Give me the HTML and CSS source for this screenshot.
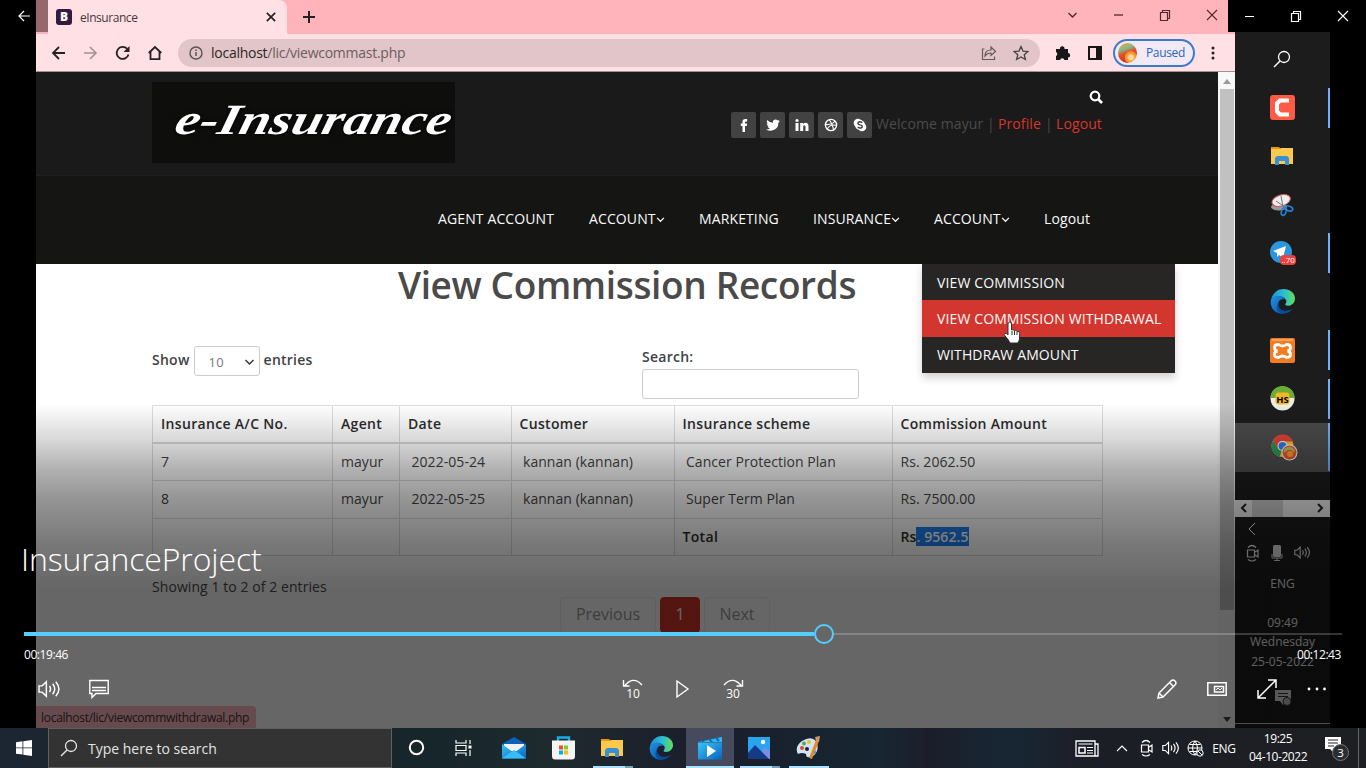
FILE: index.html
```html
<!DOCTYPE html>
<html lang="en">
<head>
<meta charset="utf-8">
<title>InsuranceProject</title>
<link rel="stylesheet" href="styles.css">
</head>
<body>
<svg class="defs" width="0" height="0" aria-hidden="true">
  <defs>
    <linearGradient id="edgeA" x1="0" y1="0" x2="1" y2="0"><stop offset="0" stop-color="#1b8fd8"/><stop offset=".55" stop-color="#2bbfd0"/><stop offset="1" stop-color="#66dd55"/></linearGradient>
    <linearGradient id="edgeB" x1="0" y1="0" x2="1" y2="1"><stop offset="0" stop-color="#1f94e4"/><stop offset="1" stop-color="#0b4fa3"/></linearGradient>
    <linearGradient id="blueG" x1="0" y1="0" x2="1" y2="1"><stop offset="0" stop-color="#36c5f8"/><stop offset="1" stop-color="#0a64c0"/></linearGradient>
  </defs>
  <symbol id="folder" viewBox="0 0 22 20"><path d="M0 1h8l2 2h-10z" fill="#e59a0c"/><path d="M0 3h9l1-1h12v16H0z" fill="#fdc94c"/><path d="M4 19v-7l2-2h10l2 2v7h-4v-4H8v4z" fill="#3a8ed6"/></symbol>
  <symbol id="edge" viewBox="0 0 24 24"><path d="M1 10C3 3 8 0 13 0c6 0 11 4 11 9 0 4-3 7-7 7-2 0-3-1-2-2 1-2 1-3 0-4-3-4-10-4-14 0z" fill="url(#edgeA)"/><path d="M1 10c4-5 11-4 13 0-4-1-7 2-6 6 1 4 4 7 7 7-8 3-16-4-14-13z" fill="url(#edgeB)"/><path d="M9 12c-3 6 3 12 13 7-5 6-13 6-15 1-1-3 0-6 2-8z" fill="#0a4c9a"/></symbol>
  <symbol id="volume" viewBox="0 0 22 18"><path d="M1 6h3l4-4v14l-4-4H1z M11 6q2 3 0 6 M14 4q4 5 0 10 M17 2q6 7 0 14" fill="none" stroke="currentColor" stroke-width="1.4"/></symbol>
  <symbol id="meet" viewBox="0 0 14 18"><path d="M1.500 6h7v7h-7z M9 8l3-2v7l-3-2 M2 3.500q4-4 8 0 M2 15.500q4 3 8 0" fill="none" stroke="currentColor" stroke-width="1.200"/></symbol>
  <symbol id="glass" viewBox="0 0 18 18"><circle cx="11" cy="7" r="5.500" fill="none" stroke="currentColor" stroke-width="1.300"/><path d="M7 11L1 17" stroke="currentColor" stroke-width="1.400"/></symbol>
  <symbol id="restore" viewBox="0 0 12 12"><path d="M1.500 3.500h7v8h-7z M3.500 3V1.500h7v8H9" fill="none" stroke="currentColor" stroke-width="1.200"/></symbol>
  <symbol id="close" viewBox="0 0 12 12"><path d="M1 1l10 10M11 1L1 11" stroke="currentColor" stroke-width="1.100"/></symbol>
  <symbol id="down" viewBox="0 0 10 7"><path d="M1 1l4 4 4-4" fill="none" stroke="currentColor" stroke-width="1.400"/></symbol>
</svg>

<div class="stage">
  <div class="video">
    <section class="browser">
      <div class="tabstrip">
        <div class="tab">
          <span class="favicon">B</span><span class="tab-title">eInsurance</span>
          <svg width="10" height="10" viewBox="0 0 12 12"><path d="M1 1l10 10M11 1L1 11" stroke="#222" stroke-width="2"/></svg>
        </div>
        <svg class="newtab" width="14" height="14"><path d="M7 1v12M1 7h12" stroke="#222" stroke-width="2"/></svg>
        <div class="winbtns">
          <svg class="thin" width="11" height="7"><use href="#down"/></svg>
          <svg width="10" height="4"><path d="M0 2h9" stroke="currentColor" stroke-width="1.300"/></svg>
          <svg width="12" height="12"><use href="#restore"/></svg>
          <svg width="12" height="12"><use href="#close"/></svg>
        </div>
      </div>
      <div class="toolbar">
        <div class="navbtns">
          <svg width="15" height="14" viewBox="0 0 15 14"><path d="M14 7H2M8 1L2 7l6 6" fill="none" stroke="#222" stroke-width="1.800"/></svg>
          <svg width="15" height="14" viewBox="0 0 15 14"><path d="M1 7h12M7 1l6 6-6 6" fill="none" stroke="#a88f93" stroke-width="1.600"/></svg>
          <svg width="16" height="16" viewBox="0 0 16 16"><path d="M13.500 9.500a6 6 0 1 1-1.500-5.800" fill="none" stroke="#222" stroke-width="1.800"/><path d="M14.500 1v6h-6z" fill="#222"/></svg>
          <svg width="14" height="16" viewBox="0 0 14 16"><path d="M.7 8L7 2l6.300 6M2.500 7v7.200h9V7" fill="none" stroke="#222" stroke-width="1.800"/></svg>
        </div>
        <div class="omnibox">
          <svg width="16" height="16"><circle cx="8" cy="8" r="6" fill="none" stroke="#555" stroke-width="1.400"/><path d="M8 7v4M8 4.500V6" stroke="#555" stroke-width="1.500"/></svg>
          <span class="url">localhost<i>/lic/viewcommast.php</i></span>
          <svg class="share" width="17" height="16" viewBox="0 0 17 16"><path d="M3.500 4H1.500v10.500h12v-3M4 11q0-6 6-6V2l4.500 4.500L10 10.500V8Q6 8 4 11z" fill="none" stroke="#665a5c" stroke-width="1.200"/></svg>
          <svg width="16" height="16" viewBox="0 0 16 16"><path d="M8 1.500l2 4.600 5 .4-3.800 3.200 1.200 4.800L8 12l-4.400 2.500 1.200-4.800L1 6.500l5-.4z" fill="none" stroke="#444" stroke-width="1.300"/></svg>
        </div>
        <svg class="puzzle" width="16" height="16" viewBox="0 0 16 16"><path d="M1 4h4a2.300 2.300 0 1 1 4.500 0H13v4a2.200 2.200 0 1 1 0 4.400V15H9.500a2.300 2.300 0 0 0-4.500 0H1v-4a2.200 2.200 0 0 0 0-4z" fill="#171717"/></svg>
        <svg class="side" width="14" height="16"><path d="M1 2h12v12H1z" fill="none" stroke="#171717" stroke-width="2"/><path d="M8 2h5v12H8z" fill="#171717"/></svg>
        <div class="profile"><span class="avatar"></span><span>Paused</span></div>
        <svg width="4" height="16" fill="#222"><circle cx="2" cy="3" r="1.500"/><circle cx="2" cy="8" r="1.500"/><circle cx="2" cy="13" r="1.500"/></svg>
      </div>
      <div class="viewport">
        <main class="page">
          <header class="top">
            <div class="logo"><span>e-Insurance</span></div>
            <div class="account">
              <svg class="find" width="14" height="14"><circle cx="6" cy="6" r="4.300" fill="none" stroke="#fff" stroke-width="2.200"/><path d="M9 9l4 4" stroke="#fff" stroke-width="2.600"/></svg>
              <div class="social">
                <b><svg width="14" height="14" viewBox="0 0 14 14"><path d="M5.500 14V8H3.800V5.500h1.700V3.600Q5.500 1 8.200 1h1.900v2.400H8.800q-.8 0-.8.800v1.300h2.100L9.800 8H8v6z" fill="#fff"/></svg></b>
                <b><svg width="14" height="14" viewBox="0 0 14 14"><path d="M0 11.500q2.500.1 4-1.100Q2 10 1.600 8.300h1.200Q.8 7.500.7 5.400l1.200.3Q0 4 1.200 1.900 3.500 4.600 6.900 4.800 6.700 1.600 9.600 1.600q1.300 0 2 .8L13.400 1.800l-1 1.500L14 2.900l-1.500 1.600Q12.400 11.800 5 12.700q-3 0-5-1.200z" fill="#fff"/></svg></b>
                <b><svg width="14" height="14" viewBox="0 0 14 14"><path d="M.5 5h3v8h-3zM5.200 5H8v1.200Q8.900 4.800 10.500 4.800q3 0 3 3.500V13h-3V8.700q0-1.500-1.100-1.500Q8.200 7.200 8.200 8.800V13h-3z" fill="#fff"/><circle cx="2" cy="2.500" r="1.600" fill="#fff"/></svg></b>
                <b><svg width="14" height="14" viewBox="0 0 14 14"><path d="M5 1.500q4 5 4.500 11M1.500 6.500Q8 7 11 3M3 11.500q3-6 9.800-4" fill="none" stroke="#fff" stroke-width="1.200"/><circle cx="7" cy="7" r="5.600" fill="none" stroke="#fff" stroke-width="1.400"/></svg></b>
                <b><svg width="14" height="14" viewBox="0 0 14 14"><circle cx="5" cy="5" r="4.300" fill="#fff"/><circle cx="9" cy="9" r="4.300" fill="#fff"/><circle cx="7" cy="7" r="5" fill="#fff"/><path d="M9.200 4.700Q7 3 5.300 4.300 4 6 7 6.900q3 .8 2 2.400-2 1.500-4.300-.2" fill="none" stroke="#444" stroke-width="1.500"/></svg></b>
                <span class="hello">Welcome mayur |</span><a class="l1">Profile</a><span class="bar">|</span><a>Logout</a>
              </div>
            </div>
          </header>
          <nav class="menu">
            <a class="s0">AGENT ACCOUNT</a>
            <a class="s1">ACCOUNT<svg width="9" height="6"><use href="#down"/></svg></a>
            <a class="s2">MARKETING</a>
            <a class="s3">INSURANCE<svg width="9" height="6"><use href="#down"/></svg></a>
            <a class="s4">ACCOUNT<svg width="9" height="6"><use href="#down"/></svg></a>
            <a class="s5">Logout</a>
            <div class="dropdown"><a>VIEW COMMISSION</a><a class="hot">VIEW COMMISSION WITHDRAWAL</a><a>WITHDRAW AMOUNT</a>
              <svg class="cursor" width="18" height="24" viewBox="0 0 18 24"><path d="M5 14V3q0-2 1.700-2T8.500 3v6q1.500-1 2.800.5 1.700-.8 2.600.8 2.500-.5 2.700 2V17q0 3-2 5H7q-1-3-5-7-1.500-2 0-2.600T5 14z" fill="#fff" stroke="#333" stroke-width="1"/><path d="M9 10v4M11.500 10v4M14 11v3" stroke="#333"/></svg>
            </div>
          </nav>
          <h1>View Commission Records</h1>
          <div class="filters">
            <label class="show">Show <span class="select">10<svg width="11" height="7" viewBox="0 0 10 7"><use href="#down"/></svg></span> entries</label>
            <label class="search">Search:<span class="input"></span></label>
          </div>
          <table>
            <colgroup><col class="c1"><col class="c2"><col class="c3"><col class="c4"><col class="c5"><col class="c6"></colgroup>
            <tr class="h"><th>Insurance A/C No.</th><th>Agent</th><th>Date</th><th>Customer</th><th>Insurance scheme</th><th>Commission Amount</th></tr>
            <tr><td>7</td><td>mayur</td><td class="in">2022-05-24</td><td class="in">kannan (kannan)</td><td class="in">Cancer Protection Plan</td><td>Rs. 2062.50</td></tr>
            <tr><td>8</td><td>mayur</td><td class="in">2022-05-25</td><td class="in">kannan (kannan)</td><td class="in">Super Term Plan</td><td>Rs. 7500.00</td></tr>
            <tr class="sum"><th></th><th></th><th></th><th></th><th>Total</th><th>Rs<mark>. 9562.5</mark></th></tr>
          </table>
          <p class="info">Showing 1 to 2 of 2 entries</p>
          <div class="pages"><span class="pv">Previous</span><span class="on">1</span><span class="nx">Next</span></div>
          <div class="status">localhost/lic/viewcommwithdrawal.php</div>
        </main>
        <div class="scroll"><i class="up"></i><div class="thumb"></div><i class="dn"></i></div>
      </div>
    </section>
    <aside class="dock">
      <div class="cell"><svg width="18" height="18"><use href="#glass"/></svg></div>
      <div class="cell run"><svg width="25" height="25"><rect width="25" height="25" rx="3" fill="#ff5a43"/><path d="M19 3.500H9l-4 4v10l4 4h10v-4h-8l-2-2v-6l2-2h8z" fill="#fff"/></svg></div>
      <div class="cell"><svg width="22" height="20"><use href="#folder"/></svg></div>
      <div class="cell"><svg width="24" height="24" viewBox="0 0 24 24"><ellipse cx="9" cy="14" rx="8" ry="3.500" fill="#999"/><ellipse cx="11" cy="7.500" rx="9.500" ry="5.500" fill="#eee" stroke="#c95b5b" transform="rotate(-17 11 7)"/><path d="M11 3l2 11M6 8l9 6" stroke="#777"/><g fill="none" stroke="#2684d9" stroke-width="1.600"><ellipse cx="14" cy="18.500" rx="2.300" ry="4" transform="rotate(20 14 18)"/><ellipse cx="19" cy="15.500" rx="4" ry="2.300" transform="rotate(20 19 15)"/></g></svg></div>
      <div class="cell run"><svg width="28" height="26" viewBox="0 0 28 26"><circle cx="13" cy="12" r="11" fill="#2b96dc"/><path d="M5 11l13-5-3 12-4-3-2 2v-4z" fill="#fff"/><rect x="12" y="15" width="16" height="10" rx="4" fill="#e9413b"/><text x="13.500" y="23" font-size="8" fill="#fff" font-family="Open Sans, sans-serif">..70</text></svg></div>
      <div class="cell"><svg width="25" height="25"><use href="#edge"/></svg></div>
      <div class="cell run"><svg width="25" height="25"><rect width="25" height="25" rx="2" fill="#f47b20"/><path d="M2 2h21" stroke="#fff" opacity=".6"/><path d="M8.500 6.500Q12.500 9.500 16.500 6.500q4 0 4 3 0 3-3 3.500 3 .5 3 3.500 0 3-4 3-4-3-8 0-4 0-4-3 0-3 3-3.500-3-.5-3-3.500 0-3 4-3z" fill="none" stroke="#fff" stroke-width="2.800"/></svg></div>
      <div class="cell run"><svg width="25" height="25"><circle cx="12.500" cy="12.500" r="12" fill="#e8eee2"/><path d="M.5 12a12 12 0 0 1 24 0z" fill="#6aad32"/><rect x="5.500" y="6.500" width="14" height="12" rx="3" fill="#f4b528"/><text x="12.500" y="16.500" text-anchor="middle" font-size="9.500" font-weight="700" font-family="Open Sans, sans-serif">HS</text></svg></div>
      <div class="cell run active"><svg width="27" height="27" viewBox="0 0 27 27"><circle cx="11.500" cy="12" r="11" fill="#f3bd2b"/><path d="M2 6.500a11 11 0 0 1 20 1H11.500l-5 7z" fill="#e04439"/><path d="M2 6.500l5 8 4 2-2.500 6.200A11 11 0 0 1 2 6.500z" fill="#299653"/><circle cx="11.500" cy="12" r="5" fill="#fff"/><circle cx="11.500" cy="12" r="4" fill="#2f78e0"/><circle cx="18.500" cy="18.500" r="8" fill="#eee"/><circle cx="18.500" cy="18.500" r="7" fill="#e5502c"/><path d="M13 15q6-5 11 1l-1 3q-2-4-6-3l-4 3z" fill="#a9b857"/><circle cx="19" cy="20" r="3" fill="#f49b31"/></svg></div>
      <div class="hscroll"><svg width="17" height="10" viewBox="0 0 17 10"><path d="M11 1L7 5l4 4" fill="none" stroke="#222" stroke-width="2"/></svg><i></i><svg class="r" width="17" height="10" viewBox="0 0 17 10"><path d="M5 1l4 4-4 4" fill="none" stroke="#222" stroke-width="2"/></svg></div>
      <div class="dock-tray">
        <svg class="chev" width="8" height="12"><path d="M7 0L1 6l6 6" fill="none" stroke="#fff"/></svg>
        <div class="trayrow"><svg width="14" height="18"><use href="#meet"/></svg><svg width="12" height="18"><rect x="2" y="1" width="8" height="12" rx="1.500" fill="#ddd"/><path d="M1 10v4h10v-4M6 14v3M3 16.500h6" fill="none" stroke="#ddd"/></svg><svg width="17" height="15"><use href="#volume"/></svg></div>
        <div class="lang">ENG</div>
        <div class="when">09:49<br>Wednesday<br>25-05-2022</div>
        <svg class="note" width="18" height="18"><path d="M1 1h16v11h-5l-3 4-3-4H1z" fill="#ddd"/><path d="M4 4.500h10M4 7.500h10" stroke="#333"/><circle cx="13" cy="12.500" r="4" fill="#bbb" stroke="#333"/></svg>
      </div>
    </aside>
  </div>

  <div class="player">
    <div class="backbtn"><svg width="12" height="12" viewBox="0 0 12 12"><path d="M12 6H1M6 1L1 6l5 5" fill="none" stroke="#fff" stroke-width="1.200"/></svg></div>
    <div class="caption">
      <svg width="10" height="4"><path d="M0 2.500h9" stroke="currentColor"/></svg>
      <svg width="12" height="12"><use href="#restore"/></svg>
      <svg width="12" height="12"><use href="#close"/></svg>
    </div>
    <div class="shade">
      <div class="title">InsuranceProject</div>
      <div class="seek"><div class="played"></div><div class="knob"></div><div class="rest"></div></div>
      <div class="times"><span>00:19:46</span><span>00:12:43</span></div>
      <div class="controls">
        <div class="grp left"><svg width="23" height="20"><use href="#volume"/></svg><svg width="20" height="20"><path d="M.8 1.500h18.400v13H7L3 18.500v-4H.8z M3 8.500h14M3 11.500h14" fill="none" stroke="#fff" stroke-width="1.400"/></svg></div>
        <div class="grp mid">
          <svg width="22" height="22"><path d="M2 8.500Q11-3 20 7M1.500 2v6h6" fill="none" stroke="#fff" stroke-width="1.400"/><text x="11" y="19.500" text-anchor="middle" font-size="12">10</text></svg>
          <svg width="14" height="20"><path d="M1 2v16l11-8z" fill="none" stroke="#fff" stroke-width="1.400"/></svg>
          <svg width="22" height="22"><path d="M20 8.500Q11-3 2 7M20.500 2v6h-6" fill="none" stroke="#fff" stroke-width="1.400"/><text x="11" y="19.500" text-anchor="middle" font-size="12">30</text></svg>
        </div>
        <div class="grp right">
          <svg width="20" height="20"><path d="M1 19l1-5L14 2q2-2 4 0t0 4L6 18zM2 14l4 4M12.500 3.500l4 4" fill="none" stroke="#fff" stroke-width="1.500"/></svg>
          <svg width="20" height="14"><path d="M.8.800h18.400v12.400H.8z M7.500 4.500h9v5.500h-9z" fill="none" stroke="#fff" stroke-width="1.500"/><path d="M9 8l2-2 2 2 2-2" fill="none" stroke="#fff"/></svg>
          <svg width="20" height="20"><path d="M1.500 18.500l17-17M11 1h8v8M1 11v8h8" fill="none" stroke="#fff" stroke-width="1.500"/></svg>
          <svg width="20" height="4" fill="#fff"><circle cx="2" cy="2" r="1.400"/><circle cx="10" cy="2" r="1.400"/><circle cx="17.500" cy="2" r="1.400"/></svg>
        </div>
      </div>
    </div>
  </div>
</div>

<footer class="taskbar">
  <div class="start"><svg width="16" height="16"><path d="M0 2.300l6.500-1v6.200H0zM7.300 1.200L16 0v7.500H7.300zM0 8.300h6.500v6.300L0 13.700zM7.300 8.300H16V16l-8.700-1.200z" fill="#fff"/></svg></div>
  <div class="tsearch"><svg width="18" height="18"><use href="#glass"/></svg><span>Type here to search</span></div>
  <div class="apps">
  <div class="app"><svg width="17" height="17"><circle cx="8.500" cy="8.500" r="6.700" fill="none" stroke="#fff" stroke-width="2"/></svg></div>
  <div class="app tv"><svg width="17" height="16"><path d="M1 0v3h10V0M1 16v-3h10v3M1 5.500h10v5H1zM15 0v4M15 10v6" fill="none" stroke="#fff" stroke-width="1.200"/><path d="M13.500 5.500h3v3h-3z" fill="#fff"/></svg></div>
  <div class="app"><svg width="24" height="24"><path d="M0 8L12 1l12 7v4H0z" fill="#0c62b5"/><path d="M2 8h20v7H2z" fill="#f2f2f4"/><path d="M0 8l12 9 12-9v14.500H0z" fill="url(#blueG)"/><path d="M0 22.500L12 14l12 8.500z" fill="#37bdf6"/></svg></div>
  <div class="app"><svg width="23" height="24"><path d="M6 5V1.500h11V5" fill="none" stroke="#19aee6" stroke-width="2.400"/><path d="M0 4.500h23V20q0 3.500-3 3.500H3q-3 0-3-3.500z" fill="#f4f4f4"/><path d="M7 9.500h4v4H7z" fill="#f1511b"/><path d="M12 9.500h4v4h-4z" fill="#80cc28"/><path d="M7 14.500h4v4H7z" fill="#00adef"/><path d="M12 14.500h4v4h-4z" fill="#fbbc09"/></svg></div>
  <div class="app open multi"><svg width="22" height="20"><use href="#folder"/></svg></div>
  <div class="app"><svg width="24" height="24"><use href="#edge"/></svg></div>
  <div class="app current"><svg width="25" height="24"><path d="M0 6l24-5v5H0z" fill="#31b8f3"/><path d="M4 5l3 2M11 3l3 3M18 2l3 3" stroke="#0c6dbf" stroke-width="2"/><path d="M0 6.500h24v16q0 1-1 1H1q-1 0-1-1z" fill="url(#blueG)"/><path d="M9 9l9 6-9 6z" fill="#fff"/></svg></div>
  <div class="app open multi"><svg width="22" height="22"><path d="M0 0h22v22H0z" fill="#27a5ee"/><path d="M12 22l4-12 6 4v8z" fill="#7e8ee6"/><path d="M0 16l7-8 14 14H0z" fill="#153b86"/><circle cx="15" cy="5" r="2.200" fill="#fff"/></svg></div>
  <div class="app open"><svg width="25" height="24"><path d="M2 18Q-2 11 6 5q8-5 13-1 4 4 2 11-3 7-10 6-1-1-1-3-4-2-8 0z" fill="#cfe5f4"/><g><circle cx="6" cy="12" r="2" fill="#e04b39"/><circle cx="8" cy="7.500" r="2" fill="#4bb14b"/><circle cx="13" cy="6" r="2" fill="#f3c02b"/><circle cx="11" cy="13" r="2" fill="#222"/><circle cx="18" cy="16" r="2" fill="#3a87dc"/></g><path d="M20 4l3 1-7 18-3-1z" fill="#e38a2d"/><path d="M19 1l5-1-1 6-3-1z" fill="#c99a6a"/></svg></div>
  </div>
  <div class="tray">
    <div class="t38"><svg width="24" height="17"><path d="M1 1h19v15H1zM20 4h3v12H19" fill="none" stroke="#fff" stroke-width="1.300"/><path d="M3.500 4h14M12 7.500h6M12 10.500h6M12 13h6" stroke="#fff"/><path d="M4 7.500h6V13H4z" fill="none" stroke="#fff" stroke-width="1.500"/></svg></div>
    <div class="t29 chevup"><svg width="12" height="8"><path d="M1 7l5-5 5 5" fill="none" stroke="#fff" stroke-width="1.200"/></svg></div>
    <div class="t24"><svg width="14" height="18"><use href="#meet"/></svg></div>
    <div class="t24"><svg width="18" height="16"><use href="#volume"/></svg></div>
    <div class="t24"><svg width="17" height="17"><path d="M1 8h14M2.500 4.500h11M2.500 11.500h8M8 1Q3 8 8 15M8 1q5 7 0 14" fill="none" stroke="#fff"/><circle cx="8" cy="8" r="7" fill="none" stroke="#fff"/><circle cx="13" cy="13" r="3.200" fill="#20242c" stroke="#fff"/><path d="M11 11l4 4" stroke="#fff"/></svg></div>
    <div class="t34">ENG</div>
    <div class="clock"><span>19:25</span><span>04-10-2022</span></div>
    <div class="bell"><svg width="26" height="26"><path d="M1 2h16v12h-5l-3 3-3-3H1z" fill="#fff"/><path d="M4 5h10M4 8h10M4 11h6" stroke="#222"/><circle cx="16.500" cy="17.500" r="8" fill="#2b2d31" stroke="#777"/><text x="16.500" y="21.500" text-anchor="middle" font-size="11.500">3</text></svg></div>
  </div>
</footer>
</body>
</html>
```
FILE: styles.css
```css
* { box-sizing: border-box; }
html, body { margin: 0; height: 100%; }
body { width: 1366px; height: 768px; overflow: hidden; background: #000; font-family: "Open Sans", "Noto Sans", sans-serif; display: flex; flex-direction: column; }
svg { display: block; flex: none; }
.defs { position: absolute; }
.stage { position: relative; height: 728px; flex: none; }
.video { display: flex; height: 728px; width: 1294px; margin-left: 36px; }

/* browser window */
.browser { width: 1199px; display: flex; flex-direction: column; background: #ffe1e5; }
.tabstrip { height: 34px; background: #ffb3ba; display: flex; align-items: center; color: #54272c; }
.tab { width: 239px; height: 34px; margin-left: 12px; padding: 0 11px 0 8px; background: #ffe1e5; border-radius: 0 8px 0 0; display: flex; align-items: center; }
.favicon { width: 16px; height: 16px; border-radius: 3px; background: #331b40; color: #fff; font-size: 12px; font-weight: 800; line-height: 16px; text-align: center; margin-right: 8px; }
.tab-title { flex: 1; font-size: 12px; color: #45383a; letter-spacing: -.45px; }
.newtab { margin-left: 15px; }
.winbtns { margin-left: auto; display: flex; align-items: center; padding: 0 17px 4px 0; }
.winbtns svg { margin-left: 35px; }
.winbtns svg + svg { margin-left: 36px; }
.winbtns svg:nth-child(3), .winbtns svg:nth-child(4) { margin-left: 35px; }
.toolbar { height: 38px; display: flex; align-items: center; border-bottom: 1px solid #a39092; padding-right: 20px; }
.navbtns { display: flex; align-items: center; width: 142px; padding-left: 15px; gap: 17px; }
.omnibox { width: 862px; height: 28px; border-radius: 14px; background: #e2c5c8; display: flex; align-items: center; padding: 0 11px 0 10px; gap: 7px; }
.url { flex: 1; font-size: 14px; color: #2d2526; letter-spacing: -.26px; }
.url i { font-style: normal; color: #6b5d5f; }
.share { margin-right: 8px; }
.puzzle { margin-left: 15px; }
.side { margin-left: 17px; }
.profile { margin: 0 16px 0 11px; width: 82px; height: 28px; border: 2px solid #3c79cf; border-radius: 14px; background: #f1e9f4; display: flex; align-items: center; gap: 9px; padding-left: 3px; font-size: 12px; color: #2c67bd; letter-spacing: -.35px; }
.avatar { width: 19px; height: 20px; border-radius: 50%; background: radial-gradient(circle at 68% 72%, #fbd9a0 12%, #f9a12e 20%, #f08c2c 30%, transparent 34%), linear-gradient(160deg, #e8a23a 10%, #7fbf8e 30%, #e4502b 48%, #d92f1c 80%); }
.viewport { display: flex; height: 656px; }
.page { position: relative; width: 1182px; background: #fff; color: #444; overflow: hidden; display: flex; flex-direction: column; }
.scroll { width: 17px; background: #f8f8f8; display: flex; flex-direction: column; align-items: center; }
.up, .dn { border: 4px solid transparent; }
.up { border-bottom: 5px solid #999; border-top: 0; margin: 7px 0 5px; }
.dn { border-top: 5px solid #444; border-bottom: 0; margin-top: auto; margin-bottom: 6px; }
.thumb { width: 14px; height: 521px; background: #c1c1c1; }

.top { height: 103px; flex: none; background: #1a1a1a; display: flex; justify-content: space-between; padding: 10px 115px 0 116px; }
.logo { width: 303px; height: 81px; background: #0e0e0d; color: #fff; display: flex; justify-content: center; padding: 13px 0 0 11px; }
.logo span { font: italic 700 43px/50px "Liberation Serif", serif; transform: skewX(-14deg) scaleX(1.28); transform-origin: 50% 70%; text-shadow: 0 0 5px #000; white-space: nowrap; }
.account { width: 372px; display: flex; flex-direction: column; padding-top: 8px; }
.find { align-self: flex-end; }
.social { display: flex; align-items: center; margin-top: 8px; font-size: 14px; line-height: 20px; white-space: nowrap; color: #4b4b4b; letter-spacing: .1px; }
.social b { width: 25px; height: 26px; border-radius: 2px; background: #424242; margin-right: 4px; display: flex; align-items: center; justify-content: center; flex: none; }
.social b + span, .social a, .social span { padding-bottom: 2px; }
.social a { color: #d9352d; }
.hello { width: 122px; }
.l1 { width: 47px; }
.bar { width: 11px; }
.menu { position: relative; height: 89px; flex: none; background: #151514; border-top: 1px solid #20201f; display: flex; align-items: center; padding-left: 402px; padding-bottom: 3px; color: #fafafa; font-size: 14px; letter-spacing: .12px; white-space: nowrap; }
.menu a { display: flex; align-items: center; }
.s0 { width: 151px; } .s1 { width: 110px; } .s2 { width: 114px; } .s3 { width: 121px; } .s4 { width: 110px; }
.menu > a svg { margin-top: 2px; }
.dropdown { position: absolute; left: 886px; top: 88px; width: 253px; background: #272625; box-shadow: 0 5px 8px rgba(0,0,0,.18); z-index: 2; }
.dropdown a { height: 36.400px; padding-left: 15px; }
.dropdown .hot { background: #d2362e; }
.cursor { position: absolute; left: 81px; top: 57px; }

h1 { margin: 0; height: 82px; flex: none; text-align: center; font-size: 37px; line-height: 42px; font-weight: 600; color: #4a4a4a; letter-spacing: -.36px; }
.filters { height: 59px; flex: none; display: flex; font-size: 14px; font-weight: 600; color: #3f4245; padding-left: 116px; letter-spacing: .25px; }
.show { width: 490px; height: 30px; display: flex; align-items: center; gap: 4px; line-height: 16px; }
.select { width: 66px; height: 30px; border: 1px solid #ccc; border-radius: 3px; display: flex; align-items: center; justify-content: space-between; padding: 2px 4px 0 14px; font-weight: 400; font-size: 13px; color: #777; position: relative; top: 1px; }
.select svg { color: #333; }
.show { padding-bottom: 2px; }
.search { width: 218px; display: flex; flex-direction: column; line-height: 22px; }
.input { width: 217px; height: 30px; margin-top: 1px; border: 1px solid #ccc; border-radius: 3px; }
table { width: 950px; margin-left: 116px; border-collapse: collapse; table-layout: fixed; font-size: 14px; color: #444; flex: none; }
.c1 { width: 180px; } .c2 { width: 67px; } .c3 { width: 111.500px; } .c4 { width: 163px; } .c5 { width: 218px; } .c6 { width: 210.500px; }
tr { height: 37.600px; }
th, td { border: 1px solid #dcdcdc; padding: 0 8px 2px; text-align: left; line-height: 19px; white-space: nowrap; letter-spacing: .05px; }
th { font-weight: 600; color: #2c2c2c; letter-spacing: .32px; }
tr.h th { border-bottom: 2px solid #d8d8d8; }
.sum th:last-child { letter-spacing: .1px; }
td.in { padding-left: 11.500px; }
mark { background: #1e80f0; color: #fff; }
.info { margin: 20px 0 0 116px; height: 22px; flex: none; font-size: 14px; line-height: 22px; color: #4a4a4a; letter-spacing: .07px; }
.pages { display: flex; margin: -1px 0 0 524px; height: 36px; gap: 4px; font-size: 16px; color: #999; }
.pages span { border: 1px solid #efefef; border-radius: 4px; display: flex; align-items: center; justify-content: center; padding-bottom: 2px; }
.pv { width: 96px; } .nx { width: 66px; }
.pages .on { width: 40px; background: #d2352b; border-color: #d2352b; color: #fff; }
.status { width: 220px; height: 22px; margin-top: auto; background: #ffb9c3; color: #433; border-radius: 0 4px 0 0; font-size: 12px; line-height: 23px; padding-left: 5px; white-space: nowrap; letter-spacing: -.28px; }

/* recorded desktop's vertical taskbar */
.dock { width: 95px; background: #1c1c1c; padding-top: 35px; color: #fff; display: flex; flex-direction: column; }
.cell { height: 48.500px; flex: none; display: flex; align-items: center; justify-content: center; padding-right: 1px; }
.run { background: linear-gradient(#6bb5ff, #6bb5ff) no-repeat right center / 2px 40px; }
.active { background: linear-gradient(#6bb5ff, #6bb5ff) no-repeat right center / 2px 48px, #4b4b4b; padding-left: 4px; }
.hscroll { margin-top: 28px; height: 17px; background: #f0f0f0; flex: none; display: flex; align-items: center; }
.hscroll i { width: 31px; height: 17px; background: #cdcdcd; }
.hscroll .r { margin-left: auto; }
.dock-tray { flex: 1; display: flex; flex-direction: column; align-items: center; margin-bottom: 4px; border-bottom: 1px solid #bbb; font-size: 12px; color: #eee; }
.chev { align-self: flex-start; margin: 6px 0 0 13px; }
.trayrow { display: flex; align-items: center; gap: 11px; margin: 9px 8px 0 0; height: 18px; }
.lang { margin-top: 13px; line-height: 18px; }
.when { margin-top: 20px; text-align: center; line-height: 19.700px; }
.note { margin-top: 17px; }

/* player overlay */
.player { position: absolute; inset: 0; color: #fff; }
.backbtn { position: absolute; left: 0; top: 0; width: 48px; height: 32px; background: rgba(0,0,0,.42); display: flex; align-items: center; justify-content: center; }
.caption { position: absolute; right: 0; top: 0; width: 138px; height: 32px; background: #000; display: flex; align-items: center; justify-content: space-around; }
.shade { position: absolute; left: 0; right: 0; bottom: 0; height: 324px; padding: 133px 24px 0; display: flex; flex-direction: column; background: linear-gradient(rgba(0,0,0,0), rgba(0,0,0,.15) 35px, rgba(0,0,0,.31) 66px, rgba(0,0,0,.42) 96px, rgba(0,0,0,.53) 140px, rgba(0,0,0,.6) 184px); }
.title { font-size: 32px; font-weight: 300; line-height: 44px; height: 86px; margin-left: -3px; letter-spacing: -.12px; }
.seek { display: flex; align-items: center; height: 22px; }
.played { width: 790px; height: 4px; background: #55cdff; }
.knob { width: 20px; height: 20px; border: 2px solid #55cdff; border-radius: 50%; }
.rest { flex: 1; height: 2px; background: rgba(255,255,255,.2); }
.times { display: flex; justify-content: space-between; font-size: 12px; line-height: 20px; height: 18px; letter-spacing: -.43px; margin-right: 1px; }
.controls { display: flex; justify-content: space-between; align-items: center; height: 48px; margin-top: 2px; }
.grp { display: flex; align-items: center; }
.left { padding-left: 14px; width: 598px; gap: 28px; }
.mid { gap: 32px; flex: 1; }
.mid text, .bell text { fill: #fff; }
.right { gap: 30px; margin-right: 15px; }

/* desktop taskbar */
.taskbar { height: 40px; background: linear-gradient(90deg, #1c2632, #17262b 430px, #1e2a2e 560px, #1b1d2b 700px, #172632 880px, #1b1e2a 930px, #182735 1010px, #1c1e27 1080px, #1d1f22 1366px); display: flex; color: #fff; }
.start { width: 48px; display: flex; align-items: center; justify-content: center; }
.tsearch { width: 344px; background: #333; border: 1px solid #606060; display: flex; align-items: center; gap: 10px; padding-left: 11px; font-size: 14px; color: #e4e4e4; }
.apps { display: flex; margin-left: -.5px; }
.app { width: 49px; height: 40px; display: flex; align-items: center; justify-content: center; border-bottom: 2px solid transparent; padding-top: 1px; }
.tv svg { margin-right: 3px; }
.open { background: linear-gradient(#a8e2ff, #a8e2ff) no-repeat 5px 38px / 40px 2px border-box; }
.multi { background: linear-gradient(90deg, #a8e2ff 32px, #76a2b4 32px) no-repeat 5px 38px / 40px 2px border-box; }
.current { background: #454b5c; border-bottom-color: #a8e2ff; margin: 0 .5px; width: 48px; }
.tray { margin-left: auto; display: flex; font-size: 12px; }
.tray > div { display: flex; align-items: center; justify-content: center; }
.t38 { width: 38px; } .t29 { width: 29px; padding-left: 3px; } .t24 { width: 24px; } .t34 { width: 34px; letter-spacing: -.3px; }
.tray .clock { width: 74px; flex-direction: column; line-height: 18px; letter-spacing: -.45px; }
.tray .bell { width: 44px; border-right: 1px solid #666; margin-right: 7px; }
```
